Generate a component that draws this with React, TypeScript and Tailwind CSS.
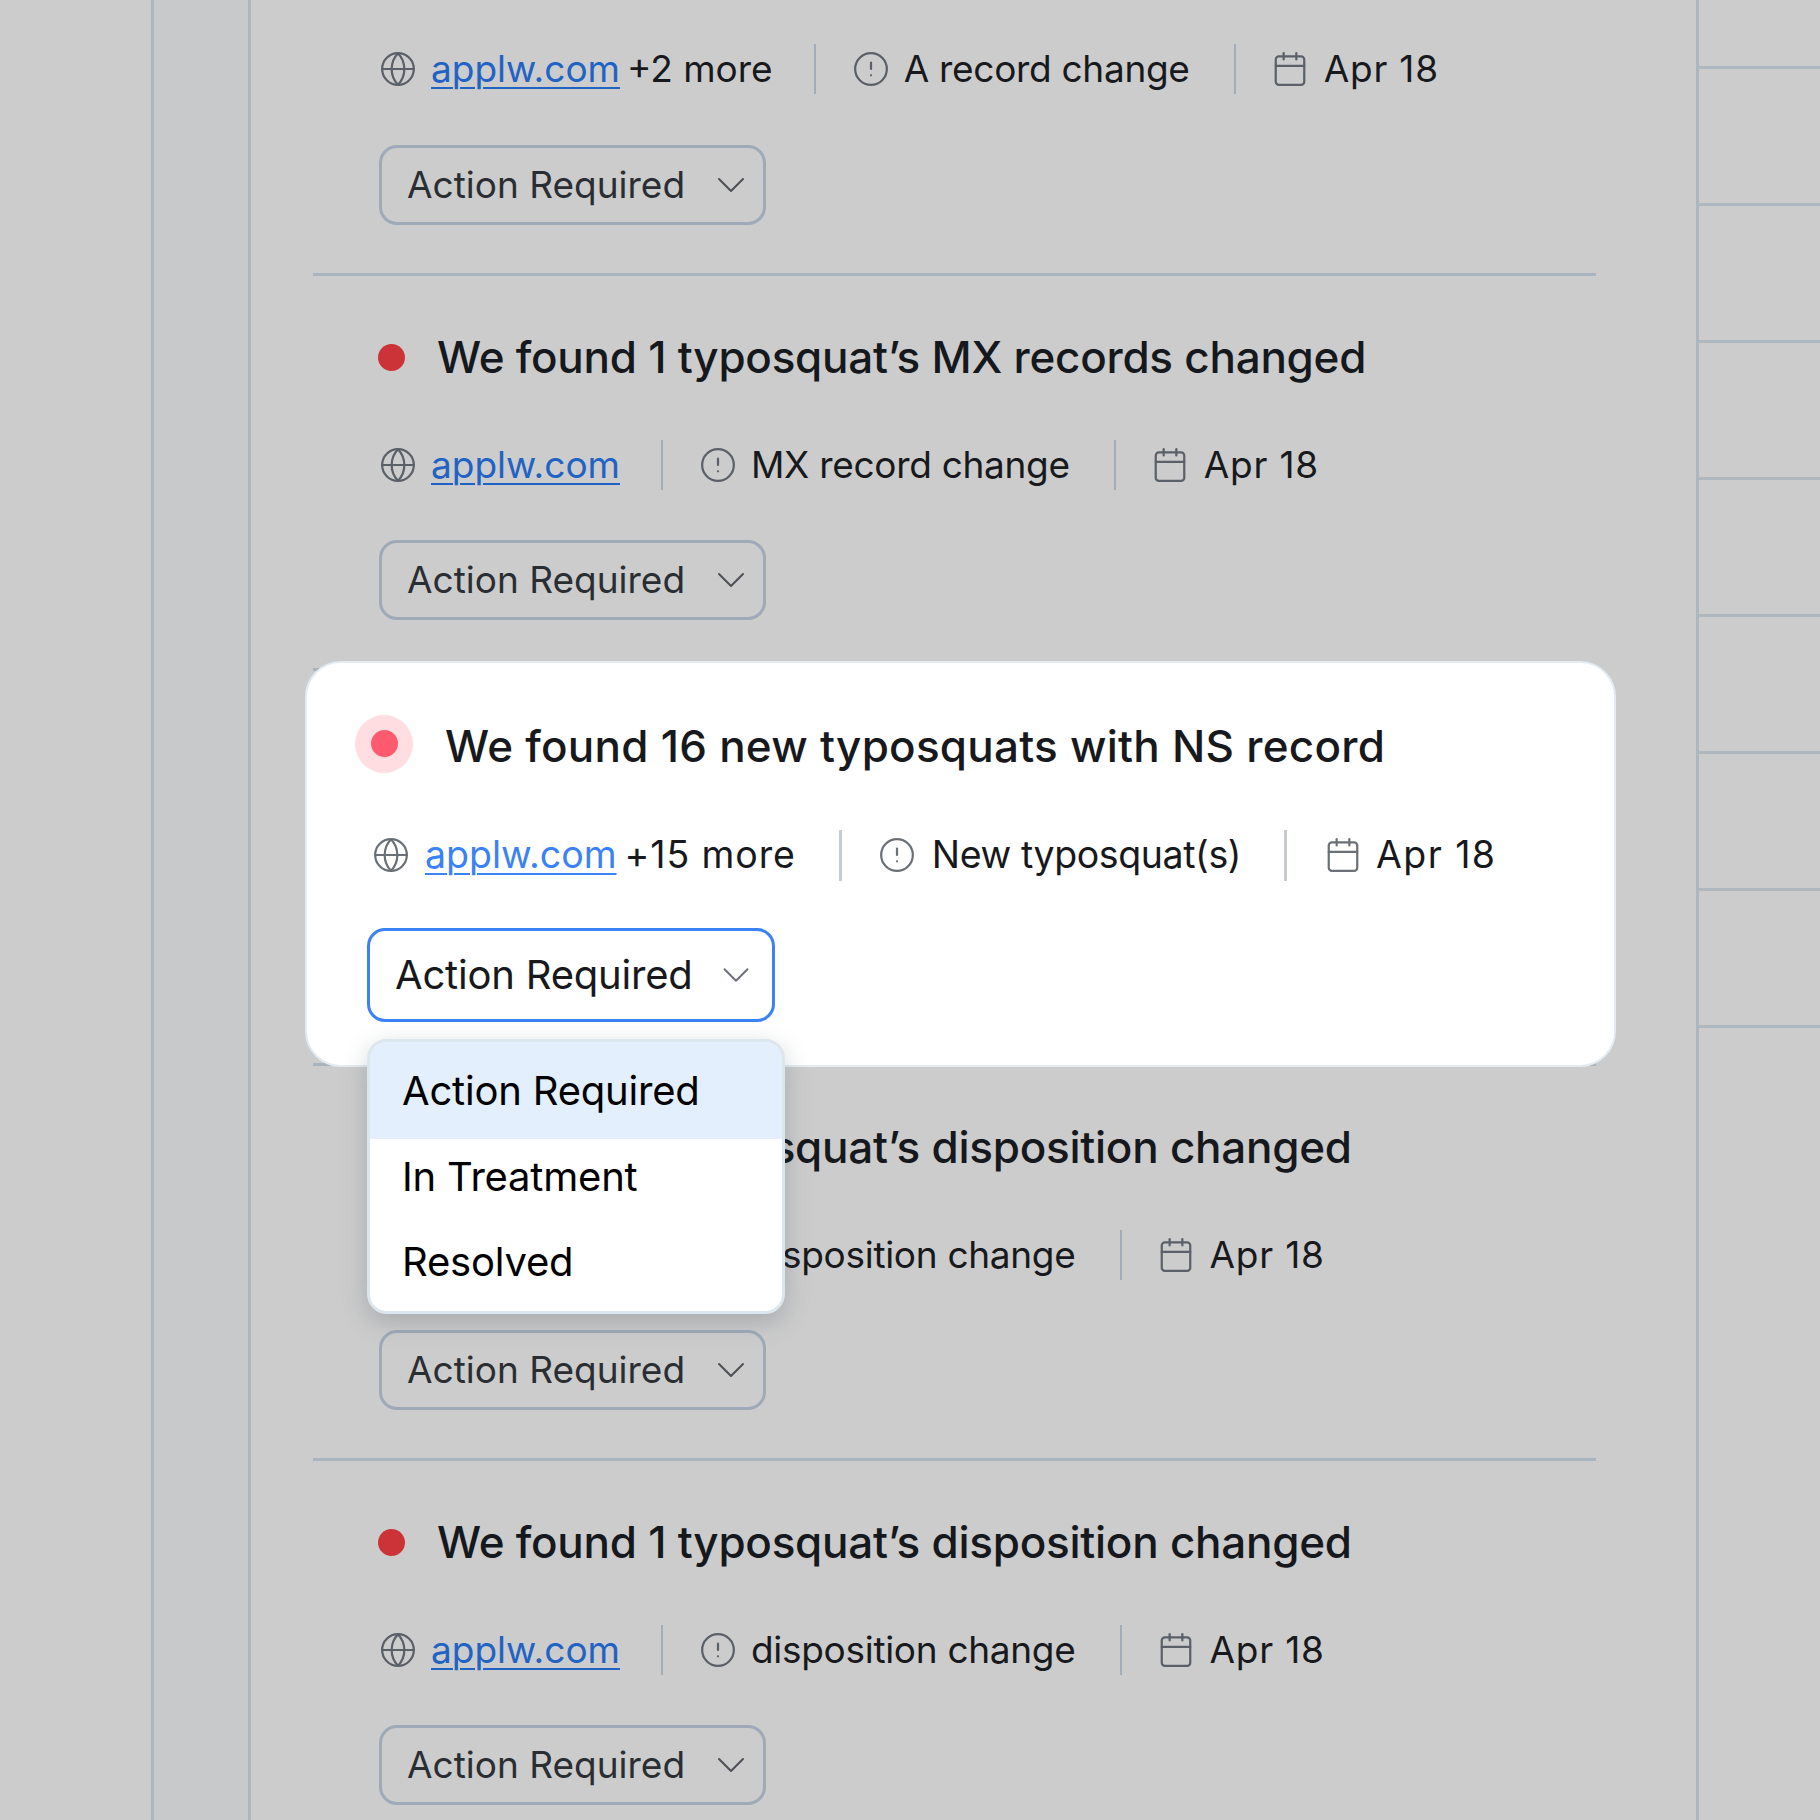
import { CircleAlert, Calendar, ChevronDown, Globe } from "lucide-react";

type Meta = { extra?: string; kind: string };

const FONT = "font-['Inter',_'Liberation_Sans',_sans-serif]";

const firstRow = {
  title: "We found 1 typosquat’s MX records changed",
  meta: { kind: "MX record change" },
};

const lastRows = [
  {
    title: "We found 1 typosquat’s disposition changed",
    meta: { kind: "disposition change" },
  },
  {
    title: "We found 1 typosquat’s disposition changed",
    meta: { kind: "disposition change" },
  },
];

function MetaLine({ extra, kind }: Meta) {
  return (
    <div className="flex h-[50px] items-center text-[37px] text-[#17191c]">
      <Globe size={38} strokeWidth={1.4} className="text-[#5b6068]" />
      <span className="ml-[14px] text-[#2163c4] underline decoration-2 underline-offset-[5px]">
        applw.com
      </span>
      {extra && <span className="ml-[7px]">{extra}</span>}
      <div className="ml-[41px] mr-[36px] h-[50px] w-[2px] bg-[#a3adb8]" />
      <CircleAlert size={38} strokeWidth={1.4} className="text-[#5b6068]" />
      <span className="ml-[14px] tracking-[-0.3px]">{kind}</span>
      <div className="ml-[44px] mr-[35px] h-[50px] w-[2px] bg-[#a3adb8]" />
      <Calendar size={38} strokeWidth={1.4} className="text-[#5b6068]" />
      <span className="ml-[15px] tracking-[0.8px]">Apr 18</span>
    </div>
  );
}

function StatusButton() {
  return (
    <div className="flex h-[80px] w-[387px] items-center justify-between rounded-[18px] border-[3px] border-[#9eaab8] pl-[25px] pr-[8px] text-[37px] text-[#2a2e33]">
      <span>Action Required</span>
      <ChevronDown size={48} strokeWidth={1} className="text-[#4d5157]" />
    </div>
  );
}

function Row({ title, meta }: { title: string; meta: Meta }) {
  return (
    <div className="h-[395px] border-t-[3px] border-[#aab4bf] pl-[66px] pt-[56px]">
      <div className="flex h-[50px] items-center">
        <div className="-ml-[1px] h-[27px] w-[27px] rounded-full bg-[#cc3338]" />
        <h3 className="ml-[32px] text-[44px] font-medium tracking-[-0.25px] text-[#15181c]">
          {title}
        </h3>
      </div>
      <div className="mt-[58px]">
        <MetaLine {...meta} />
      </div>
      <div className="mt-[50px]">
        <StatusButton />
      </div>
    </div>
  );
}

function HighlightCard() {
  return (
    <div className="absolute left-[54px] top-[661px] h-[406px] w-[1311px] rounded-[36px] border-2 border-[#e4ebf1] bg-white">
      <div className="ml-[48px] mt-[53px] flex h-[60px] items-center">
        <div className="-mt-[5px] flex h-[58px] w-[58px] items-center justify-center rounded-full bg-[#ffdde0]">
          <div className="h-[27px] w-[27px] rounded-full bg-[#ff5a6e]" />
        </div>
        <h3 className="ml-[32px] text-[44px] font-medium tracking-[0.25px] text-[#17191c]">
          We found 16 new typosquats with NS record
        </h3>
      </div>
      <div className="ml-[65px] mt-[53px] flex h-[52px] items-center text-[37.5px] text-[#17191c]">
        <Globe size={38} strokeWidth={1.4} className="text-[#6b7076]" />
        <span className="ml-[15px] text-[#3b82f6] underline decoration-2 underline-offset-[5px]">
          applw.com
        </span>
        <span className="ml-[8px] tracking-[0.9px]">+15 more</span>
        <div className="ml-[43px] mr-[36px] h-[51px] w-[3px] bg-[#c8ccd0]" />
        <CircleAlert size={38} strokeWidth={1.4} className="text-[#6b7076]" />
        <span className="ml-[16px] tracking-[-0.4px]">New typosquat(s)</span>
        <div className="ml-[43px] mr-[37px] h-[51px] w-[3px] bg-[#c8ccd0]" />
        <Calendar size={38} strokeWidth={1.4} className="text-[#6b7076]" />
        <span className="ml-[14px] tracking-[1.4px]">Apr 18</span>
      </div>
      <div className="ml-[60px] mt-[47px] flex h-[94px] w-[408px] items-center justify-between rounded-[18px] border-[3px] border-[#3b82f6] pl-[25px] pr-[13px] text-[40px] tracking-[-0.2px] text-[#17191c]">
        <span>Action Required</span>
        <ChevronDown size={46} strokeWidth={1} className="text-[#6b7076]" />
      </div>
      <div className="absolute left-[60px] top-[376px] w-[418px] overflow-hidden rounded-[20px] border-[3px] border-[#dce6ee] bg-white text-[40px] tracking-[-0.2px] text-black shadow-[0_8px_24px_rgba(60,70,85,0.25)]">
        <div className="flex h-[97px] items-center bg-[#e3effd] pl-[32px]">Action Required</div>
        <div className="flex h-[76px] items-center pl-[32px]">In Treatment</div>
        <div className="flex h-[96px] items-center pb-[2px] pl-[32px]">Resolved</div>
      </div>
    </div>
  );
}

export default function App() {
  return (
    <div className={`flex h-[1820px] w-[1820px] overflow-hidden bg-[#cccccc] ${FONT}`}>
      <div className="w-[151px] shrink-0" />
      <div className="w-[100px] shrink-0 border-x-[3px] border-[#aeb7c0] bg-[#c8c9ca]" />

      <main className="relative w-[1445px] shrink-0">
        <div className="ml-[62px] w-[1283px]">
          <div className="h-[273px] pl-[66px] pt-[44px]">
            <MetaLine extra="+2 more" kind="A record change" />
            <div className="mt-[51px]">
              <StatusButton />
            </div>
          </div>
          <Row title={firstRow.title} meta={firstRow.meta} />
          {/* this row sits behind the highlighted card */}
          <div className="h-[395px] border-t-[3px] border-[#aab4bf]" />
          {lastRows.map((row, i) => (
            <Row key={i} title={row.title} meta={row.meta} />
          ))}
        </div>
        <HighlightCard />
      </main>

      <aside className="flex-1 border-l-[3px] border-[#aeb7c0]">
        <div className="h-[69px] border-b-[3px] border-[#aeb7c0]" />
        {[0, 1, 2, 3, 4, 5, 6].map((i) => (
          <div key={i} className="h-[137px] border-b-[3px] border-[#aeb7c0]" />
        ))}
      </aside>
    </div>
  );
}
